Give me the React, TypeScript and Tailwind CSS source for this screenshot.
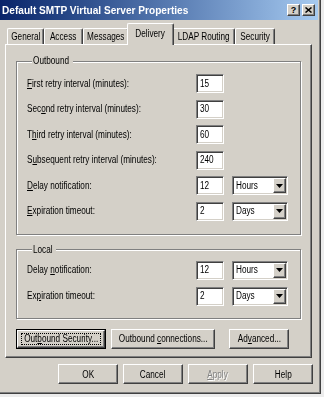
import React from 'react';

const raised =
  'bg-[#d4d0c8] border border-t-white border-l-white border-r-[#404040] border-b-[#404040] shadow-[inset_-1px_-1px_0_#808080]';
const sunken =
  'bg-white border border-t-[#808080] border-l-[#808080] border-r-white border-b-white shadow-[inset_1px_1px_0_#404040,inset_-1px_-1px_0_#d4d0c8]';

// the screenshot was squeezed sideways, so text is narrowed to match
function Sx({ children, center }: { children: React.ReactNode; center?: boolean }) {
  return (
    <span
      className={`inline-block whitespace-nowrap scale-x-[0.82] ${center ? 'origin-center' : 'origin-left'}`}
    >
      {children}
    </span>
  );
}

function TextBox({ value }: { value: string }) {
  return (
    <div className={`${sunken} w-[28px] h-[19px] flex items-center pl-[3px] text-[10px] leading-[12px]`}>
      <Sx>{value}</Sx>
    </div>
  );
}

function Combo({ value }: { value: string }) {
  return (
    <div className={`${sunken} ml-[8px] w-[56px] h-[19px] flex items-center p-[1px]`}>
      <span className="flex-1 pl-[2px] text-[10px] leading-[12px]">
        <Sx>{value}</Sx>
      </span>
      <div className={`${raised} w-[13px] h-[15px] flex items-center justify-center`}>
        <svg width="7" height="4" viewBox="0 0 7 4">
          <path d="M0 0h7L3.5 4z" fill="#000" />
        </svg>
      </div>
    </div>
  );
}

function Field({ label, value, unit }: { label: React.ReactNode; value: string; unit?: string }) {
  return (
    <div className="flex items-center h-[19px]">
      <div className="w-[169px] text-[10px] leading-[12px]">
        <Sx>{label}</Sx>
      </div>
      <TextBox value={value} />
      {unit && <Combo value={unit} />}
    </div>
  );
}

function U({ children }: { children: React.ReactNode }) {
  return <span className="underline underline-offset-[1px]">{children}</span>;
}

function Button({
  children,
  w,
  focused,
  disabled,
}: {
  children: React.ReactNode;
  w: string;
  focused?: boolean;
  disabled?: boolean;
}) {
  const inner = (
    <div className={`${raised} ${focused ? 'h-[18px]' : 'h-[20px]'} w-full flex items-center justify-center`}>
      {focused ? (
        <span className="border border-dotted border-black w-[80px] h-[12px] flex items-center justify-center leading-[11px]">
          <Sx center>{children}</Sx>
        </span>
      ) : (
        <span className={disabled ? 'text-[#808080] [text-shadow:1px_1px_0_#ffffff]' : ''}>
          <Sx center>{children}</Sx>
        </span>
      )}
    </div>
  );
  return focused ? (
    <div className={`${w} h-[20px] border border-black`}>{inner}</div>
  ) : (
    <div className={w}>{inner}</div>
  );
}

export default function App() {
  const tabs = [
    { name: 'General', w: 'w-[37px]' },
    { name: 'Access', w: 'w-[39px]' },
    { name: 'Messages', w: 'w-[46px]' },
    { name: 'Delivery', w: 'w-[41px]', active: true },
    { name: 'LDAP Routing', w: 'w-[63px]' },
    { name: 'Security', w: 'w-[40px]' },
  ];

  return (
    <div className="w-[324px] h-[397px] bg-[#ececec] font-['Liberation_Sans',Arial,sans-serif] text-[10px] text-black">
      <div className="w-[321px] h-[394px] bg-[#d4d0c8] border-r border-b border-[#404040] shadow-[inset_-1px_-1px_0_#808080] flex flex-col">
        {/* title bar */}
        <div className="w-[318px] h-[20px] bg-gradient-to-r from-[#0a246a] to-[#a6caf0] flex items-center pl-[2px] pr-[3px]">
          <span className="text-white font-bold text-[11px] leading-[14px] inline-block whitespace-nowrap scale-x-[0.92] origin-left">
            Default SMTP Virtual Server Properties
          </span>
          <div className="ml-auto flex gap-[2px]">
            <div className={`${raised} w-[13px] h-[12px] flex items-center justify-center font-bold text-[9px] leading-[9px]`}>
              ?
            </div>
            <div className={`${raised} w-[13px] h-[12px] flex items-center justify-center`}>
              <svg width="7" height="6" viewBox="0 0 7 6">
                <path d="M0.5 0.5L6.5 5.5M6.5 0.5L0.5 5.5" stroke="#000" strokeWidth="1.5" />
              </svg>
            </div>
          </div>
        </div>

        {/* tabs */}
        <div className="mt-[6px] ml-[7px] h-[18px] flex items-end">
          {tabs.map((t) =>
            t.active ? (
              <div
                key={t.name}
                className={`${t.w} relative z-10 -mx-[2px] box-content px-[2px] h-[19px] -mb-[1px] bg-[#d4d0c8] border-t border-l border-r border-t-white border-l-white border-r-[#404040] shadow-[inset_-1px_0_0_#808080] rounded-t-[2px] flex items-start justify-center pt-[2px]`}
              >
                <Sx center>{t.name}</Sx>
              </div>
            ) : (
              <div
                key={t.name}
                className={`${t.w} h-[16px] border-t border-l border-r border-t-white border-l-white border-r-[#404040] shadow-[inset_-1px_0_0_#808080] rounded-t-[2px] flex items-center justify-center`}
              >
                <Sx center>{t.name}</Sx>
              </div>
            )
          )}
        </div>

        {/* tab panel */}
        <div className="ml-[5px] w-[307px] h-[314px] border border-t-white border-l-white border-r-[#404040] border-b-[#404040] shadow-[inset_-1px_-1px_0_#808080] pl-[10px] pt-[10px]">
          <fieldset className="w-[285px] border border-[#808080] shadow-[inset_1px_1px_0_#ffffff,1px_1px_0_#ffffff] pl-[10px] pt-[7px] pb-[13px]">
            <legend className="ml-[5px] w-[41px] px-[1px] bg-[#d4d0c8] leading-[12px]">
              <Sx>Outbound</Sx>
            </legend>
            <div className="flex flex-col gap-[6.5px]">
              <Field label={<><U>F</U>irst retry interval (minutes):</>} value="15" />
              <Field label={<>Sec<U>o</U>nd retry interval (minutes):</>} value="30" />
              <Field label={<>T<U>h</U>ird retry interval (minutes):</>} value="60" />
              <Field label={<>S<U>u</U>bsequent retry interval (minutes):</>} value="240" />
              <Field label={<><U>D</U>elay notification:</>} value="12" unit="Hours" />
              <Field label={<><U>E</U>xpiration timeout:</>} value="2" unit="Days" />
            </div>
          </fieldset>

          <fieldset className="mt-[9px] w-[285px] border border-[#808080] shadow-[inset_1px_1px_0_#ffffff,1px_1px_0_#ffffff] pl-[10px] pt-[5px] pb-[12px]">
            <legend className="ml-[5px] w-[24px] px-[1px] bg-[#d4d0c8] leading-[12px]">
              <Sx>Local</Sx>
            </legend>
            <div className="flex flex-col gap-[7px]">
              <Field label={<>Delay <U>n</U>otification:</>} value="12" unit="Hours" />
              <Field label={<>Ex<U>p</U>iration timeout:</>} value="2" unit="Days" />
            </div>
          </fieldset>

          <div className="mt-[10px] flex">
            <Button w="w-[90px]" focused>
              Out<U>b</U>ound Security...
            </Button>
            <div className="ml-[5px]">
              <Button w="w-[104px]">
                Outbound <U>c</U>onnections...
              </Button>
            </div>
            <div className="ml-[14px]">
              <Button w="w-[60px]">
                Ad<U>v</U>anced...
              </Button>
            </div>
          </div>
        </div>

        {/* dialog buttons */}
        <div className="mt-[6px] pl-[58px] flex gap-[5px]">
          <Button w="w-[60px]">OK</Button>
          <Button w="w-[60px]">Cancel</Button>
          <Button w="w-[60px]" disabled>
            <U>A</U>pply
          </Button>
          <Button w="w-[60px]">Help</Button>
        </div>
      </div>
    </div>
  );
}
